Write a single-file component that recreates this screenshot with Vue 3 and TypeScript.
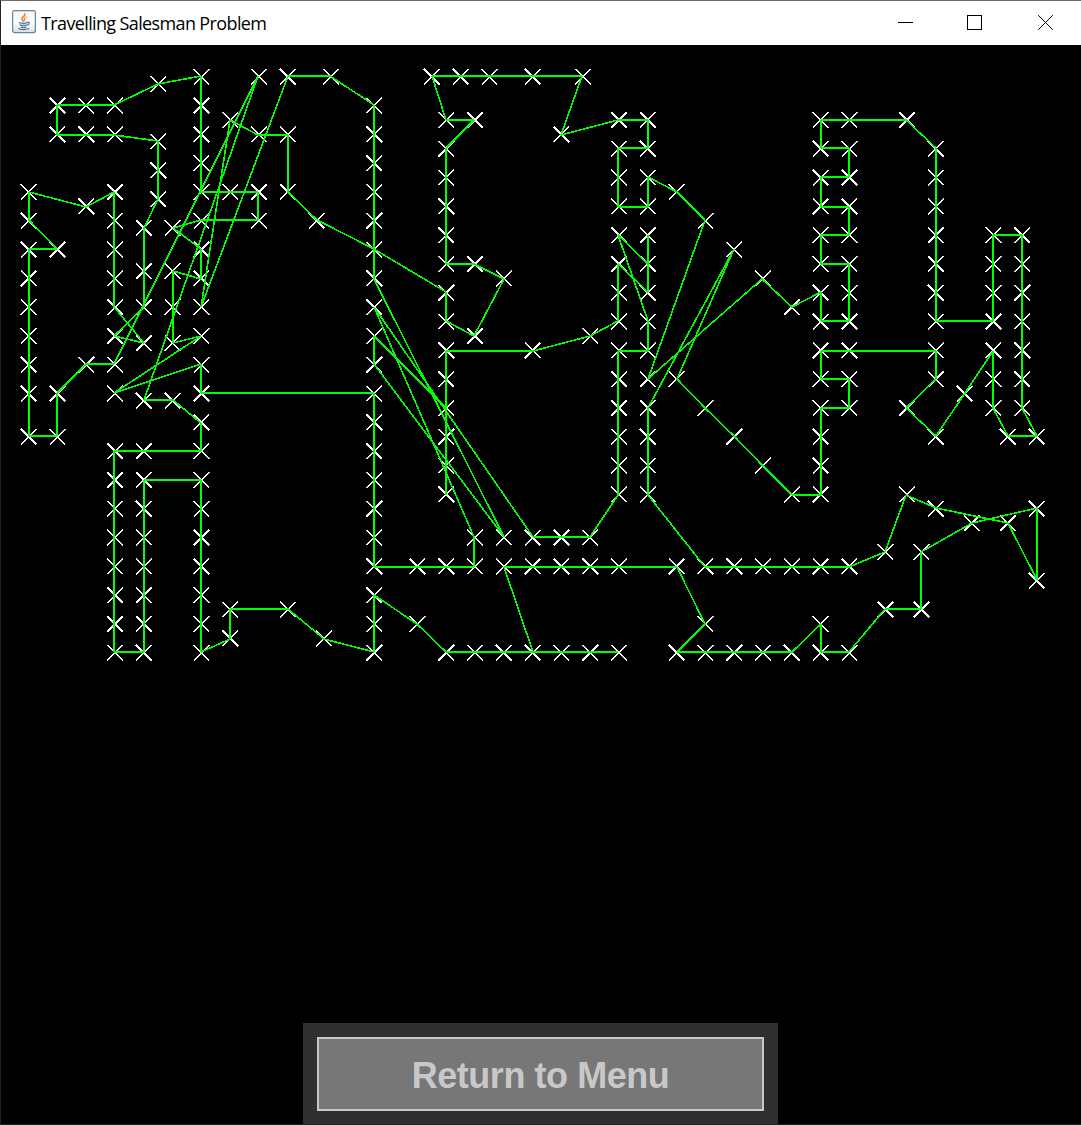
<script setup lang="ts">
type Point = [number, number]

// Cities in visiting order, in data units.
const route = `
56,9 44,11 32,17 24,17 16,17 16,25 24,25 32,25 44,27 44,35 44,43 40,51 40,63 40,73
32,81 40,83 32,73 32,65 32,57 32,49 32,41 24,45 8,41 8,49 16,57 8,57 8,65 8,73 8,81
8,89 8,97 8,109 16,109 16,97 24,89 32,89 72,9 40,99 48,99 56,105 56,113 40,113 32,113
32,121 32,129 32,137 32,145 32,153 32,161 32,169 40,169 40,161 40,153 40,145 40,137
40,129 40,121 56,121 56,129 56,137 56,145 56,153 56,161 56,169 64,165 64,157 80,157
90,165 104,169 104,161 104,153 116,161 124,169 132,169 140,169 156,169 164,169 172,169
148,169 140,145 148,145 156,145 164,145 172,145 188,145 196,161 188,169 196,169 204,169
212,169 220,169 228,161 228,169 236,169 246,157 256,157 256,141 270,133 288,129 288,149
280,133 260,129 252,125 246,141 236,145 228,145 220,145 212,145 204,145 196,145 180,125
180,117 180,109 180,101 204,57 188,93 196,101 204,109 212,117 220,125 228,125 228,117
228,109 228,101 236,101 236,93 228,93 228,85 236,85 260,85 260,93 252,101 260,109
268,97 276,85 276,93 276,101 280,109 288,109 284,101 284,93 284,85 284,77 284,69 284,61
284,53 276,53 276,61 276,69 276,77 260,77 260,69 260,61 260,53 260,45 260,37 260,29
252,21 236,21 228,21 228,29 236,29 236,37 228,37 228,45 236,45 236,53 228,53 228,61
236,61 236,69 236,77 228,77 228,69 220,73 212,65 180,93 196,49 188,41 180,37 180,45
172,45 172,37 172,29 180,29 180,21 172,21 156,25 162,9 148,9 136,9 128,9 120,9 124,21
132,21 124,29 124,37 124,45 124,53 124,61 132,61 140,65 132,81 124,77 124,69 104,57
88,49 80,41 80,25 72,25 64,21 56,73 80,9 92,9 104,17 104,25 104,33 104,41 104,49 104,57
104,65 140,137 104,89 104,81 124,101 124,109 124,117 124,125 124,93 124,85 148,85 164,81
172,77 172,69 172,61 180,69 180,53 180,61 172,53 180,77 180,85 172,85 172,93 172,101
172,109 172,117 172,125 164,137 156,137 148,137 104,73 132,137 132,145 124,145 116,145
104,145 104,137 104,129 104,121 104,113 104,105 104,97 56,97 56,89 32,97 56,81 48,83
48,73 48,63 56,65 56,57 48,51 56,49 72,49 72,41 64,41 56,41 56,33 56,25 56,17 56,9`

const cities: Point[] = route
  .trim()
  .split(/\s+/)
  .map((pair) => pair.split(',').map(Number) as Point)

// Route vertices sit on whole logical pixels, shown at 150% display scale.
const snapX = (x: number) => Math.round(Math.floor(x * 2.4) * 1.5)
const snapY = (y: number) => Math.floor(Math.floor(y * 2.4) * 1.5)

const legs = cities.slice(1).map((to, i) => ({ from: cities[i], to }))
const isStraight = ({ from, to }: { from: Point; to: Point }) =>
  from[0] === to[0] || from[1] === to[1]
const toPath = (list: typeof legs) =>
  list
    .map(({ from, to }) => `M${snapX(from[0])} ${snapY(from[1])}L${snapX(to[0])} ${snapY(to[1])}`)
    .join('')

const straightPath = toPath(legs.filter(isStraight))
const slantedPath = toPath(legs.filter((leg) => !isStraight(leg)))

const arm = 7.8
const crossPath = cities
  .map(([x, y]) => {
    const cx = x * 3.6 - 0.15
    const cy = y * 3.6 - 0.65
    const l = (cx - arm).toFixed(2)
    const r = (cx + arm).toFixed(2)
    const t = (cy - arm).toFixed(2)
    const b = (cy + arm).toFixed(2)
    return `M${l} ${t}L${r} ${b}M${r} ${t}L${l} ${b}`
  })
  .join('')
</script>

<template>
  <main class="window">
    <header class="titlebar">
      <svg class="app-icon" width="24" height="24" viewBox="0 0 24 24">
        <defs>
          <linearGradient id="tile" x1="0" y1="0" x2="0" y2="1">
            <stop offset="0" stop-color="#f4f5f6" />
            <stop offset="0.5" stop-color="#fdfdfd" />
            <stop offset="1" stop-color="#dcdfe3" />
          </linearGradient>
        </defs>
        <rect x="0.6" y="0.6" width="22.8" height="22" rx="2" fill="url(#tile)" stroke="#66839a" stroke-width="1.2" />
        <g fill="none" stroke-linecap="round">
          <path d="M12.8 4c.9 2.2-3.5 3-2.8 5.2.2.8 1.1 1.2 1.4 2" stroke="#e8863a" stroke-width="1.7" />
          <path d="M14.2 7.2c-2.2 1-2.4 1.8-1.2 3.4" stroke="#e8863a" stroke-width="1.2" />
          <path d="M7.5 12.6c2 .8 6 .7 7.8 0M8.3 14.9c2 .7 4.4.7 6.2.1M9.1 17.1c1.4.6 3.4.6 4.8 0" stroke="#50799d" stroke-width="1.3" />
          <path d="M15.6 12.3c2.2-.6 2.6 1.7-.2 2.8M6.6 18.4c1 1.5 8.2 1.5 10.2.2" stroke="#50799d" stroke-width="1.2" />
        </g>
      </svg>
      <h1 class="title">Travelling Salesman Problem</h1>
      <nav class="controls">
        <button class="control" aria-label="Minimize">
          <svg width="16" height="16" viewBox="0 0 16 16" shape-rendering="crispEdges">
            <path d="M0 7.5H15" />
          </svg>
        </button>
        <button class="control middle" aria-label="Maximize">
          <svg width="16" height="16" viewBox="0 0 16 16" shape-rendering="crispEdges">
            <path d="M.5.5H14.5V14.5H.5Z" />
          </svg>
        </button>
        <button class="control" aria-label="Close">
          <svg width="16" height="16" viewBox="0 0 16 16">
            <path d="M.2.2L14.8 14.8M14.8.2L.2 14.8" />
          </svg>
        </button>
      </nav>
    </header>
    <svg class="plot" width="1080" height="978" viewBox="1 0 1080 978" shape-rendering="crispEdges">
      <path class="crosses" :d="crossPath" />
      <path class="route slanted" :d="slantedPath" />
      <path class="route" :d="straightPath" />
    </svg>
    <footer class="footer">
      <div class="panel">
        <button class="menu-button">Return to Menu</button>
      </div>
    </footer>
  </main>
</template>

<style>
body {
  background: #000;
}
</style>

<style scoped>
.window {
  box-sizing: border-box;
  display: flex;
  flex-direction: column;
  width: 1081px;
  height: 1125px;
  overflow: hidden;
  border-top: 1px solid #6b6b6b;
  border-left: 1px solid #222;
  border-bottom: 1px solid #222;
  background: #000;
}

.titlebar {
  display: flex;
  flex: none;
  align-items: center;
  height: 44px;
  background: #fff;
}

.app-icon {
  margin: -2px 0 0 11px;
}

.title {
  margin: 0 0 0 5px;
  color: #000;
  font: 400 18px/24px "Open Sans", "Noto Sans", sans-serif;
  letter-spacing: -0.63px;
  white-space: nowrap;
}

.controls {
  display: flex;
  height: 100%;
  margin-left: auto;
}

.control {
  box-sizing: border-box;
  display: flex;
  align-items: center;
  justify-content: center;
  width: 70px;
  padding: 0;
  border: 0;
  background: none;
}

.control.middle {
  padding-right: 2px;
}

.control svg {
  fill: none;
  stroke: #000;
  stroke-width: 1;
}

.plot {
  display: block;
  flex: none;
}

.crosses {
  fill: none;
  stroke: #fff;
  stroke-width: 1.65;
}

.route {
  fill: none;
  stroke: #0f0;
  stroke-width: 2;
}

.route.slanted {
  stroke-width: 1.6;
}

.footer {
  display: flex;
  flex: 1;
  padding-left: 302px;
}

.panel {
  box-sizing: border-box;
  width: 475px;
  padding: 14px 14px 13px;
  background: #303030;
}

.menu-button {
  display: block;
  box-sizing: border-box;
  width: 447px;
  height: 74px;
  padding: 4px 0 0;
  border: 2px solid #c8c8c8;
  border-radius: 0;
  background: #777;
  color: #c8c8c8;
  font: 700 36px/40px "Liberation Sans", Arial, sans-serif;
  letter-spacing: -0.45px;
}
</style>
